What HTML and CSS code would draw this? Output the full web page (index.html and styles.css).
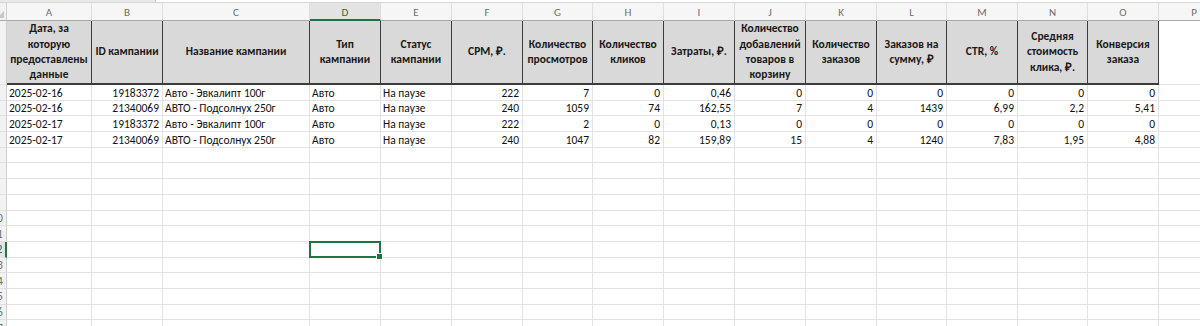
FILE: index.html
```html
<!DOCTYPE html>
<html lang="ru">
<head>
<meta charset="utf-8">
<title>Рекламные кампании</title>
<link rel="stylesheet" href="styles.css">
</head>
<body>
<div class="app">
  <div class="formula-strip"><div class="formula-box"></div></div>
  <div class="sheet">
    <table class="grid">
      <colgroup>
        <col class="c-rn"><col class="c-a"><col class="c-b"><col class="c-c"><col class="c-71"><col class="c-71"><col class="c-71"><col class="c-70"><col class="c-71"><col class="c-71"><col class="c-71"><col class="c-71"><col class="c-70"><col class="c-71"><col class="c-70"><col class="c-71"><col class="c-71">
      </colgroup>
      <thead>
        <tr class="col-heads">
          <th class="corner"><span class="tri"></span></th>
          <th>A</th><th>B</th><th>C</th><th class="cur">D</th><th>E</th><th>F</th><th>G</th><th>H</th><th>I</th><th>J</th><th>K</th><th>L</th><th>M</th><th>N</th><th>O</th><th>P</th>
        </tr>
      </thead>
      <tbody>
        <tr class="r-title">
          <th class="rn"><span>1</span></th>
          <td class="h">Дата, за которую предоставлены данные</td>
          <td class="h">ID кампании</td>
          <td class="h">Название кампании</td>
          <td class="h">Тип кампании</td>
          <td class="h">Статус кампании</td>
          <td class="h">CPM, ₽.</td>
          <td class="h">Количество просмотров</td>
          <td class="h">Количество кликов</td>
          <td class="h">Затраты, ₽.</td>
          <td class="h">Количество добавлений товаров в корзину</td>
          <td class="h">Количество заказов</td>
          <td class="h">Заказов на сумму, ₽</td>
          <td class="h">CTR, %</td>
          <td class="h">Средняя стоимость клика, ₽.</td>
          <td class="h">Конверсия заказа</td>
          <td></td>
        </tr>
        <tr>
          <th class="rn"><span>2</span></th>
          <td>2025-02-16</td><td class="n">19183372</td><td>Авто - Эвкалипт 100г</td><td>Авто</td><td>На паузе</td>
          <td class="n">222</td><td class="n">7</td><td class="n">0</td><td class="n">0,46</td><td class="n">0</td><td class="n">0</td><td class="n">0</td><td class="n">0</td><td class="n">0</td><td class="n">0</td><td></td>
        </tr>
        <tr>
          <th class="rn"><span>3</span></th>
          <td>2025-02-16</td><td class="n">21340069</td><td>АВТО - Подсолнух 250г</td><td>Авто</td><td>На паузе</td>
          <td class="n">240</td><td class="n">1059</td><td class="n">74</td><td class="n">162,55</td><td class="n">7</td><td class="n">4</td><td class="n">1439</td><td class="n">6,99</td><td class="n">2,2</td><td class="n">5,41</td><td></td>
        </tr>
        <tr>
          <th class="rn"><span>4</span></th>
          <td>2025-02-17</td><td class="n">19183372</td><td>Авто - Эвкалипт 100г</td><td>Авто</td><td>На паузе</td>
          <td class="n">222</td><td class="n">2</td><td class="n">0</td><td class="n">0,13</td><td class="n">0</td><td class="n">0</td><td class="n">0</td><td class="n">0</td><td class="n">0</td><td class="n">0</td><td></td>
        </tr>
        <tr>
          <th class="rn"><span>5</span></th>
          <td>2025-02-17</td><td class="n">21340069</td><td>АВТО - Подсолнух 250г</td><td>Авто</td><td>На паузе</td>
          <td class="n">240</td><td class="n">1047</td><td class="n">82</td><td class="n">159,89</td><td class="n">15</td><td class="n">4</td><td class="n">1240</td><td class="n">7,83</td><td class="n">1,95</td><td class="n">4,88</td><td></td>
        </tr>
        <tr><th class="rn"><span>6</span></th><td></td><td></td><td></td><td></td><td></td><td></td><td></td><td></td><td></td><td></td><td></td><td></td><td></td><td></td><td></td><td></td></tr>
        <tr><th class="rn"><span>7</span></th><td></td><td></td><td></td><td></td><td></td><td></td><td></td><td></td><td></td><td></td><td></td><td></td><td></td><td></td><td></td><td></td></tr>
        <tr><th class="rn"><span>8</span></th><td></td><td></td><td></td><td></td><td></td><td></td><td></td><td></td><td></td><td></td><td></td><td></td><td></td><td></td><td></td><td></td></tr>
        <tr><th class="rn"><span>9</span></th><td></td><td></td><td></td><td></td><td></td><td></td><td></td><td></td><td></td><td></td><td></td><td></td><td></td><td></td><td></td><td></td></tr>
        <tr><th class="rn"><span>10</span></th><td></td><td></td><td></td><td></td><td></td><td></td><td></td><td></td><td></td><td></td><td></td><td></td><td></td><td></td><td></td><td></td></tr>
        <tr><th class="rn"><span>11</span></th><td></td><td></td><td></td><td></td><td></td><td></td><td></td><td></td><td></td><td></td><td></td><td></td><td></td><td></td><td></td><td></td></tr>
        <tr><th class="rn cur"><span>12</span></th><td></td><td></td><td></td><td class="sel"></td><td></td><td></td><td></td><td></td><td></td><td></td><td></td><td></td><td></td><td></td><td></td><td></td></tr>
        <tr><th class="rn"><span>13</span></th><td></td><td></td><td></td><td></td><td></td><td></td><td></td><td></td><td></td><td></td><td></td><td></td><td></td><td></td><td></td><td></td></tr>
        <tr><th class="rn"><span>14</span></th><td></td><td></td><td></td><td></td><td></td><td></td><td></td><td></td><td></td><td></td><td></td><td></td><td></td><td></td><td></td><td></td></tr>
        <tr><th class="rn"><span>15</span></th><td></td><td></td><td></td><td></td><td></td><td></td><td></td><td></td><td></td><td></td><td></td><td></td><td></td><td></td><td></td><td></td></tr>
        <tr><th class="rn"><span>16</span></th><td></td><td></td><td></td><td></td><td></td><td></td><td></td><td></td><td></td><td></td><td></td><td></td><td></td><td></td><td></td><td></td></tr>
        <tr><th class="rn"><span>17</span></th><td></td><td></td><td></td><td></td><td></td><td></td><td></td><td></td><td></td><td></td><td></td><td></td><td></td><td></td><td></td><td></td></tr>
      </tbody>
    </table>
  </div>
</div>
</body>
</html>
```
FILE: styles.css
```css
* { box-sizing: border-box; }

html, body {
  margin: 0;
  padding: 0;
  background: #ffffff;
  overflow: hidden;
}

.app {
  width: 1200px;
  height: 326px;
  overflow: hidden;
  font-family: Calibri, Carlito, "Liberation Sans", Arial, sans-serif;
  font-size: 11.5px;
  color: #111111;
}

.formula-strip {
  height: 3px;
  background: #e9e9e9;
  display: flex;
  justify-content: flex-end;
  border-bottom: 1px solid #d6d6d6;
}

.formula-box {
  width: 1045px;
  height: 2px;
  background: #ffffff;
  border-left: 1px solid #d0d0d0;
}

.sheet {
  margin-left: -12px;
}

.grid {
  table-layout: fixed;
  border-collapse: separate;
  border-spacing: 0;
  width: 1242px;
}

.c-rn { width: 19px; }
.c-a { width: 85px; }
.c-b { width: 71px; }
.c-c { width: 147px; }
.c-71 { width: 71px; }
.c-70 { width: 70px; }

th, td {
  padding: 0 3px 0 2px;
  border-right: 1px solid #e2e2e2;
  border-bottom: 1px solid #e2e2e2;
  white-space: nowrap;
  overflow: hidden;
  font-weight: normal;
  line-height: 14px;
  vertical-align: bottom;
}

tbody tr { height: 15.7px; }

/* column letters */
.col-heads th {
  height: 18px;
  background: #f6f6f6;
  color: #6e6e6e;
  text-align: center;
  vertical-align: bottom;
  font-size: 11px;
  line-height: 12px;
  border-right: 1px solid #dedede;
  border-bottom: 1px solid #a9a9a9;
  padding: 0 0 1px 0;
}

.col-heads th.cur {
  background: #e3e3e3;
  color: #217346;
  border-bottom: 2px solid #217346;
  padding-bottom: 0;
}

.col-heads th.corner {
  background: #f2f2f2;
  position: relative;
  border-right: 1px solid #cfcfcf;
}

.tri {
  position: absolute;
  right: 2px;
  bottom: 2px;
  width: 0;
  height: 0;
  border-left: 7px solid transparent;
  border-bottom: 7px solid #c8c8c8;
}

/* row numbers */
th.rn {
  background: #f2f2f2;
  color: #6e6e6e;
  text-align: center;
  vertical-align: middle;
  padding: 0;
  border-right: 1px solid #cfcfcf;
  border-bottom: 1px solid #e0e0e0;
  font-size: 11.5px;
}

th.rn.cur {
  background: #e3e3e3;
  color: #217346;
  border-right: 2px solid #217346;
}

/* title row */
.r-title { height: 64px; }

.r-title td.h {
  background: #d9d9d9;
  font-weight: bold;
  text-align: center;
  vertical-align: middle;
  white-space: normal;
  line-height: 15.3px;
  padding: 0 2px;
  border-right: 1px solid #3c3c3c;
  border-bottom: 2px solid #3c3c3c;
  color: #1a1a1a;
}

.r-title td:last-child {
  border-bottom: 1px solid #e2e2e2;
}

td.n { text-align: right; }

/* active cell */
td.sel {
  position: relative;
  overflow: visible;
}

td.sel::after {
  content: "";
  position: absolute;
  left: -1px;
  top: -1px;
  right: -1px;
  bottom: -1px;
  border: 2px solid #217346;
}

td.sel::before {
  content: "";
  position: absolute;
  right: -3px;
  bottom: -3px;
  width: 5px;
  height: 5px;
  background: #217346;
  border: 1px solid #ffffff;
  z-index: 1;
}
```
